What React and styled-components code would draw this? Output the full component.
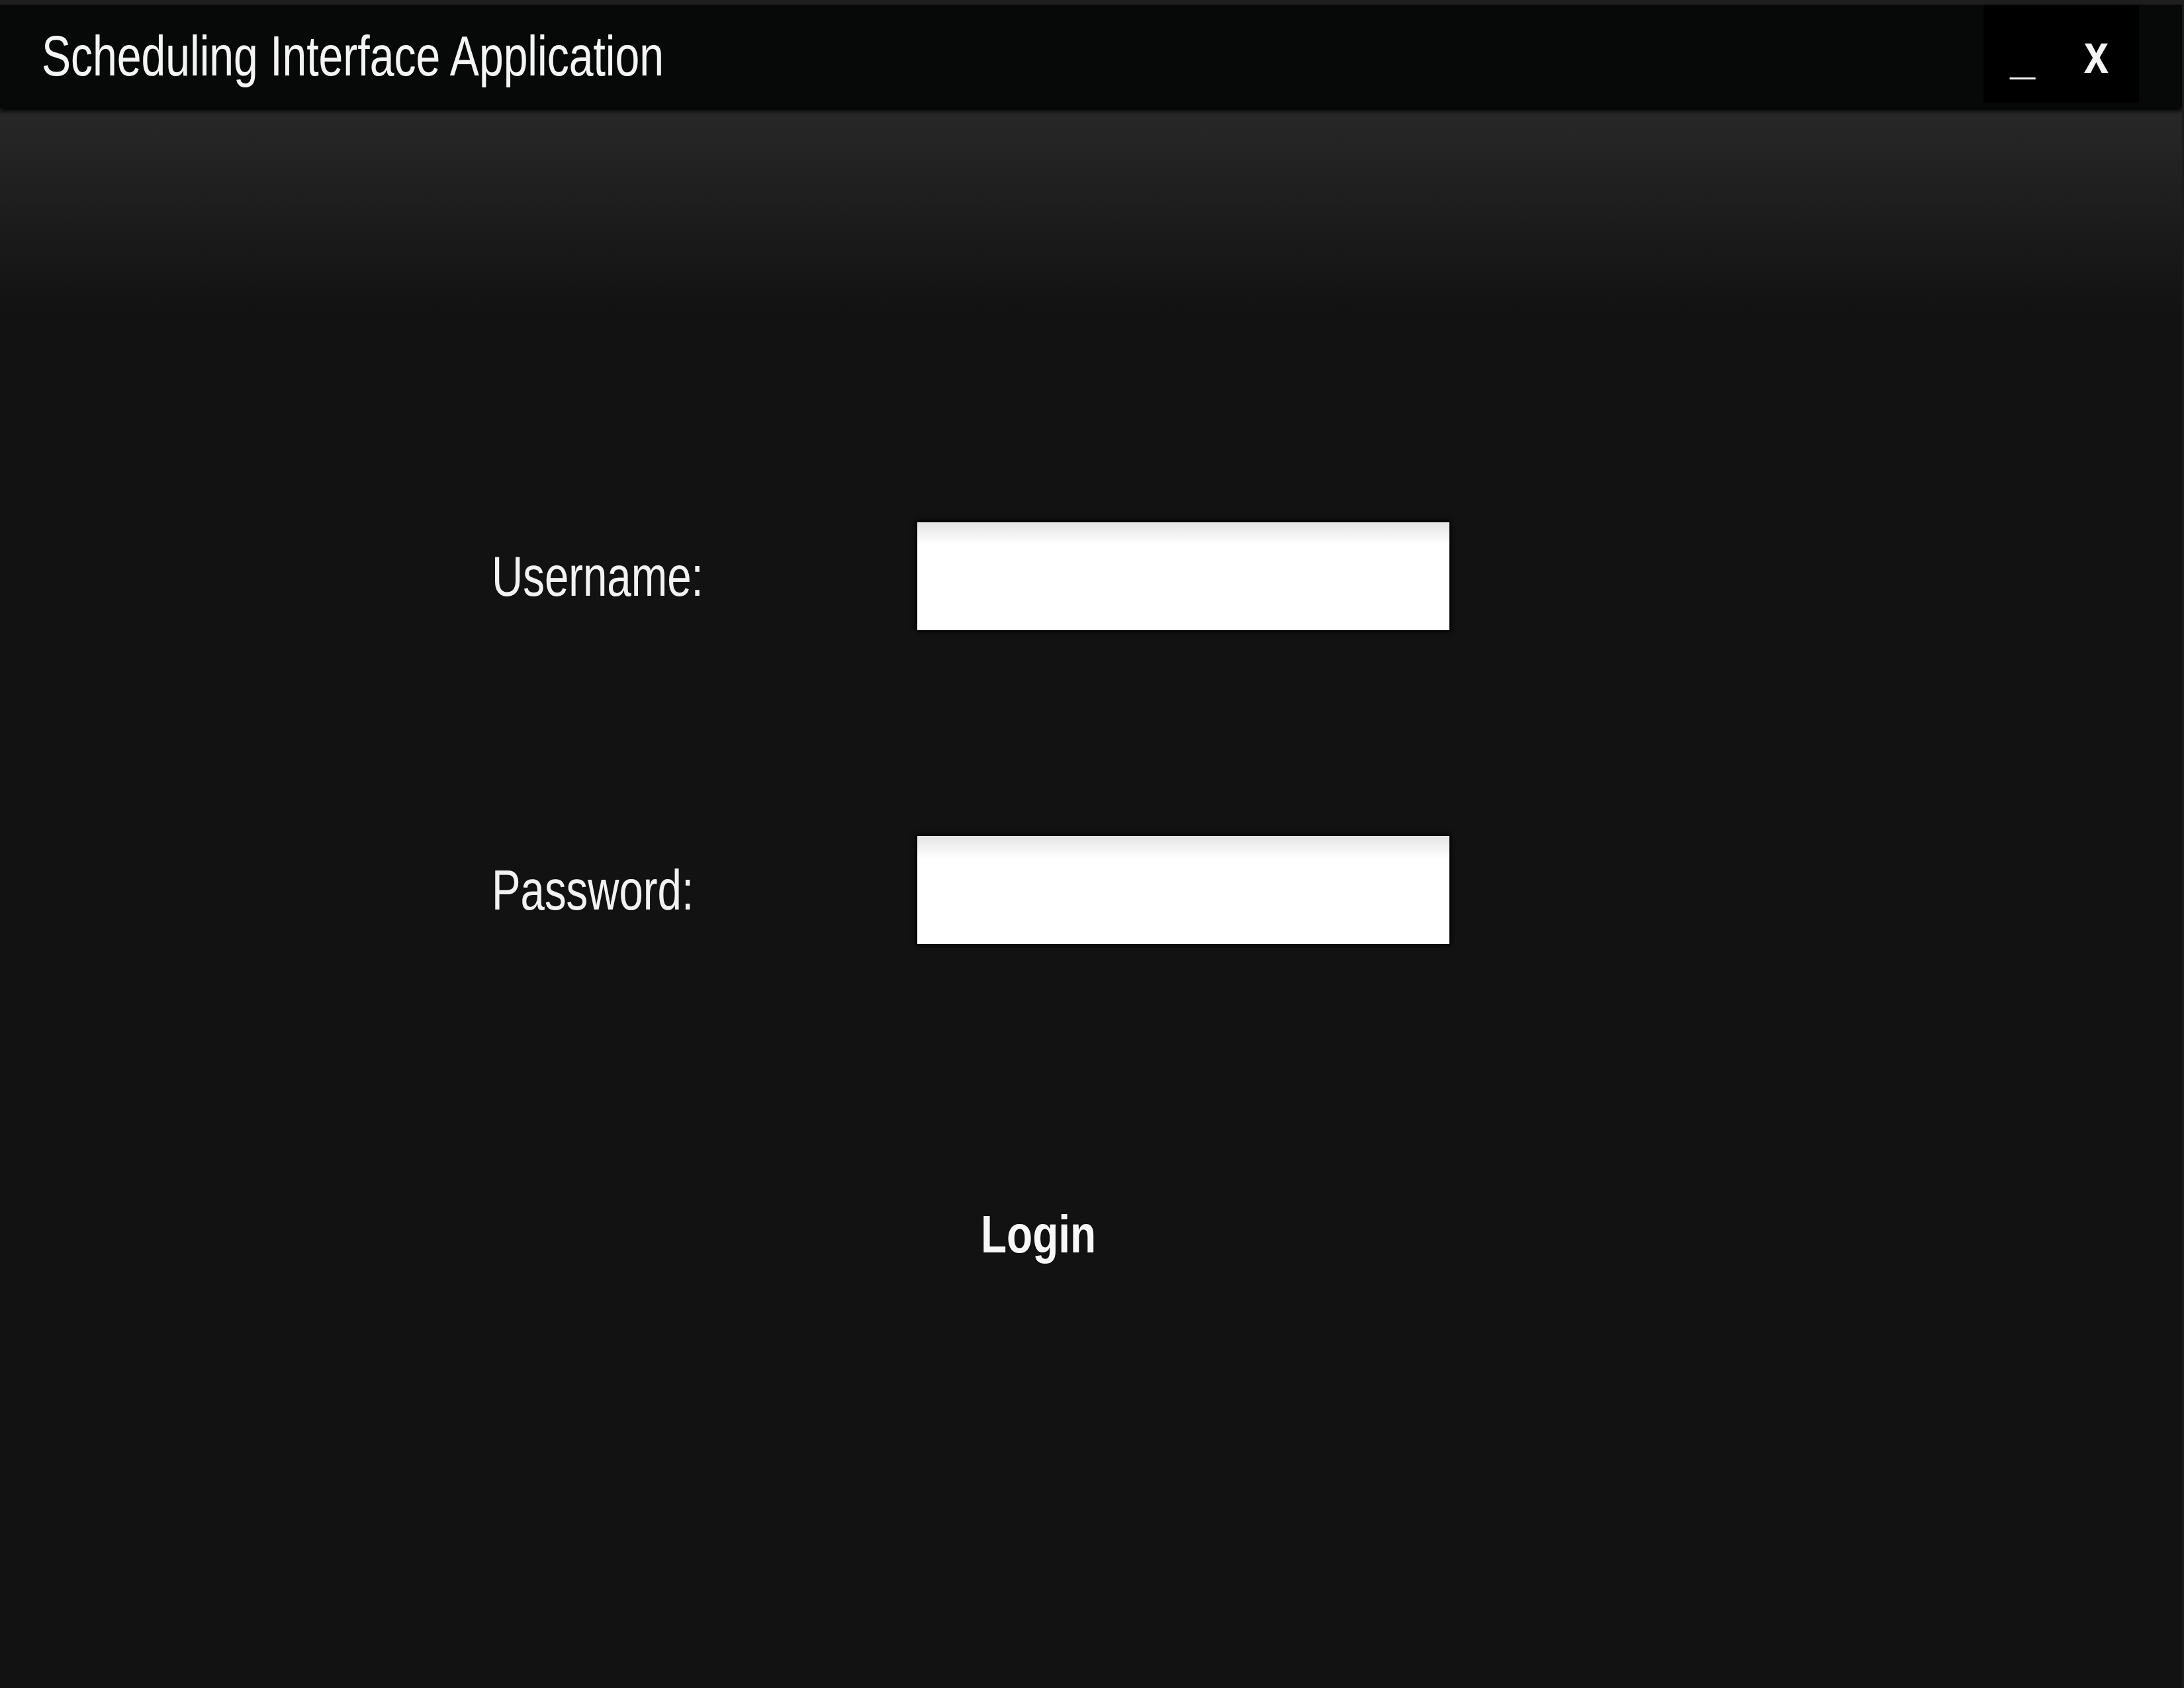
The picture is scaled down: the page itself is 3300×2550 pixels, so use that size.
import styled, { createGlobalStyle } from 'styled-components';

const GlobalStyle = createGlobalStyle`
  html, body {
    margin: 0;
    padding: 0;
    background: #121212;
  }
  body {
    font-family: "Liberation Sans", Arial, sans-serif;
  }
`;

const Window = styled.div`
  width: 3300px;
  height: 2550px;
  box-sizing: border-box;
  display: flex;
  flex-direction: column;
  background: #121212;
  border-top: 7px solid #1e1e1e;
  border-right: 3px solid #1c1c1c;
  overflow: hidden;
`;

const TitleBar = styled.header`
  flex: none;
  height: 156px;
  display: flex;
  align-items: center;
  justify-content: space-between;
  padding: 0 65px 0 63px;
  background: #070808;
  box-shadow: 0 5px 6px rgba(0, 0, 0, 0.9);
  position: relative;
  z-index: 1;
`;

// the original ui uses a condensed face, so squeeze a regular one
const Narrow = styled.span`
  display: inline-block;
  white-space: nowrap;
  transform: scaleX(${(p) => p.$squeeze || 0.77});
  transform-origin: ${(p) => p.$origin || 'left'} center;
`;

const Title = styled.h1`
  margin: 0;
  font-size: 85px;
  font-weight: 400;
  color: #f4f4f4;
  text-shadow: 0 0 2px rgba(0, 0, 0, 0.6), 0 0 1px rgba(255, 255, 255, 0.4);
`;

const Controls = styled.div`
  align-self: flex-start;
  height: 148px;
  display: flex;
  background: #000;
`;

const ControlButton = styled.button`
  width: ${(p) => p.$width}px;
  height: 100%;
  display: flex;
  justify-content: center;
  align-items: center;
  padding: ${(p) => p.$drop || 0}px ${(p) => p.$padRight || 0}px 0 0;
  border: none;
  background: transparent;
  color: #f5f5f5;
  font-family: "Liberation Sans", Arial, sans-serif;
  font-size: ${(p) => p.$size || 84}px;
  font-weight: 700;
  cursor: pointer;
`;

const Content = styled.main`
  flex: 1;
  display: flex;
  flex-direction: column;
  align-items: flex-start;
  padding: 626px 0 0 743px;
  background: linear-gradient(#282828 0, #121212 310px, #121212 100%);
`;

const Form = styled.div`
  display: grid;
  grid-template-columns: 643px 804px;
  grid-auto-rows: 163px;
  row-gap: 311px;
  align-items: center;
`;

const Label = styled.label`
  font-size: 86px;
  color: #f2f2f2;
  text-shadow: 0 0 2px rgba(0, 0, 0, 0.7), 0 0 1px rgba(255, 255, 255, 0.4);
`;

const Field = styled.input`
  width: 100%;
  height: 100%;
  box-sizing: border-box;
  border: none;
  outline: none;
  padding: 0 20px;
  font-size: 60px;
  background: linear-gradient(#e4e4e4 0, #ffffff 34px, #ffffff 100%);
  box-shadow: 0 0 7px 2px rgba(0, 0, 0, 0.95);
`;

const LoginButton = styled.button`
  margin: 393px 0 0 739px;
  padding: 0;
  border: none;
  background: transparent;
  color: #f7f7f7;
  font-family: "Liberation Sans", Arial, sans-serif;
  font-size: 80px;
  font-weight: 700;
  text-shadow: 0 0 2px rgba(0, 0, 0, 0.7);
  cursor: pointer;
`;

export default function App() {
  return (
    <>
      <GlobalStyle />
      <Window>
        <TitleBar>
          <Title>
            <Narrow $squeeze={0.777}>Scheduling Interface Application</Narrow>
          </Title>
          <Controls>
            <ControlButton $width={118} $size={80} $drop={4}>
              <Narrow $squeeze={0.85} $origin="center">_</Narrow>
            </ControlButton>
            <ControlButton $width={117} $padRight={12}>
              <Narrow $squeeze={0.8} $origin="center">x</Narrow>
            </ControlButton>
          </Controls>
        </TitleBar>
        <Content>
          <Form>
            <Label htmlFor="username">
              <Narrow $squeeze={0.76}>Username:</Narrow>
            </Label>
            <Field id="username" type="text" />
            <Label htmlFor="password">
              <Narrow $squeeze={0.76}>Password:</Narrow>
            </Label>
            <Field id="password" type="password" />
          </Form>
          <LoginButton>
            <Narrow $squeeze={0.8}>Login</Narrow>
          </LoginButton>
        </Content>
      </Window>
    </>
  );
}
